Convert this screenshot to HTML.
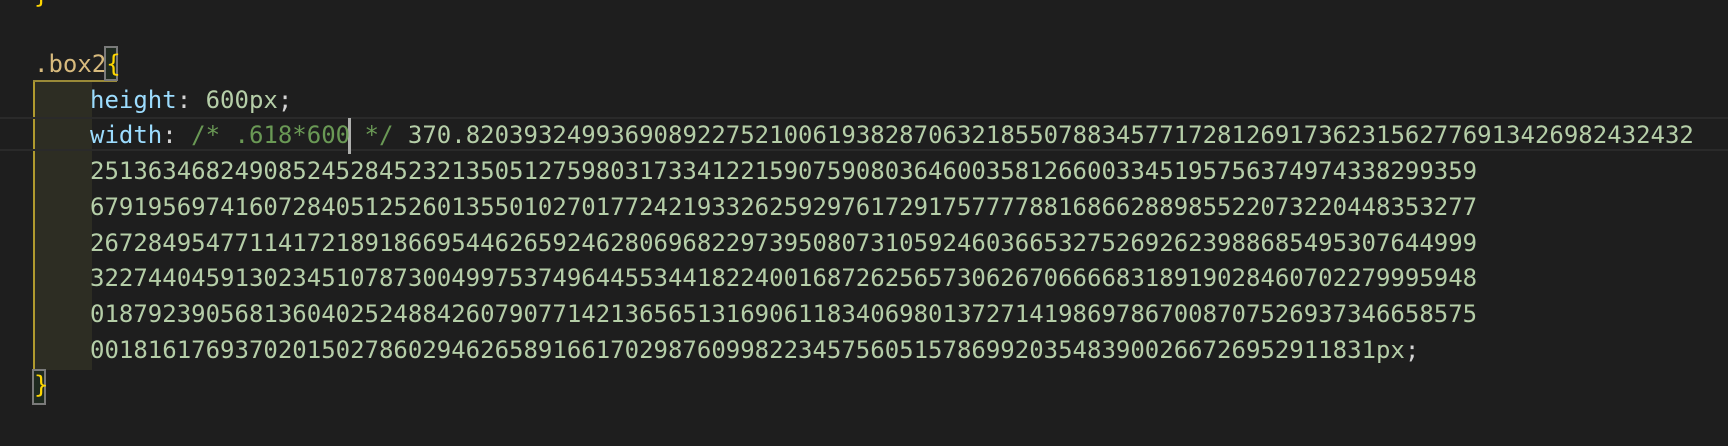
<!DOCTYPE html>
<html><head><meta charset="utf-8"><style>
html,body{margin:0;padding:0;background:#1e1e1e;width:1728px;height:446px;overflow:hidden}
.l{position:absolute;left:0;height:35.7px;line-height:35.7px;font-family:"DejaVu Sans Mono","Liberation Mono",monospace;font-size:24px;white-space:pre;color:#b5cea8}
.p{color:#9cdcfe}.c{color:#6a9955}.s{color:#d7ba7d}.b{color:#ffd700}.w{color:#d4d4d4}
</style></head><body>
<div style="position:absolute;left:33px;top:81px;width:57px;height:289px;background:#2d2d23;border-left:2px solid #b09a2e"></div>
<div style="position:absolute;left:33px;top:80px;width:84px;height:2px;background:#9a8a38"></div>
<div style="position:absolute;left:0;top:117px;width:1728px;height:34px;border-top:2px solid #2a2a2a;border-bottom:2px solid #2a2a2a;box-sizing:border-box"></div>
<div style="position:absolute;left:104px;top:46px;width:14px;height:35px;border:2px solid #7a7a7a;box-sizing:border-box;background:#1f2a20"></div>
<div style="position:absolute;left:32px;top:369px;width:14px;height:36px;border:2px solid #7a7a7a;box-sizing:border-box;background:#1f2a20"></div>
<div style="position:absolute;left:348px;top:118px;width:3px;height:36px;background:#aeafad"></div>
<div class="l" style="top:-22px;left:34px"><span class="b">}</span></div>
<div class="l" style="top:47px;left:34px"><span class="s">.box2</span><span class="b">{</span></div>
<div class="l" style="top:82.7px;left:90px"><span class="p">height</span><span class="w">: </span>600px<span class="w">;</span></div>
<div class="l" style="top:118.4px;left:90px"><span class="p">width</span><span class="w">: </span><span class="c">/* .618*600 */</span> 370.8203932499369089227521006193828706321855078834577172812691736231562776913426982432432</div>
<div class="l" style="top:154.1px;left:90px">251363468249085245284523213505127598031733412215907590803646003581266003345195756374974338299359</div>
<div class="l" style="top:189.8px;left:90px">679195697416072840512526013550102701772421933262592976172917577778816866288985522073220448353277</div>
<div class="l" style="top:225.5px;left:90px">267284954771141721891866954462659246280696822973950807310592460366532752692623988685495307644999</div>
<div class="l" style="top:261.2px;left:90px">322744045913023451078730049975374964455344182240016872625657306267066668318919028460702279995948</div>
<div class="l" style="top:296.9px;left:90px">018792390568136040252488426079077142136565131690611834069801372714198697867008707526937346658575</div>
<div class="l" style="top:332.6px;left:90px">00181617693702015027860294626589166170298760998223457560515786992035483900266726952911831px<span class="w">;</span></div>
<div class="l" style="top:368.3px;left:34px"><span class="b">}</span></div>
</body></html>
